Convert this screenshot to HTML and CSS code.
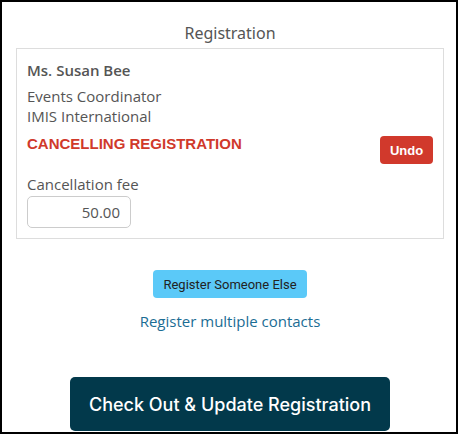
FILE: index.html
```html
<!DOCTYPE html>
<html lang="en">
  <head>
    <meta charset="UTF-8" />
    <meta name="viewport" content="width=device-width, initial-scale=1.0" />
    <title>Registration</title>
    <link rel="stylesheet" href="styles.css">
  </head>
  <body>
    <div class="frame">
      <h2 class="title">Registration</h2>

      <div class="card">
        <div class="name">Ms. Susan Bee</div>
        <div class="details">
          Events Coordinator<br />
          IMIS International
        </div>
        <div class="status-row">
          <span class="status">CANCELLING REGISTRATION</span>
          <button class="btn-undo">Undo</button>
        </div>
        <label class="fee-label" for="fee">Cancellation fee</label>
        <input class="fee-input" id="fee" type="text" value="50.00" />
      </div>

      <div class="actions">
        <button class="btn-other">Register Someone Else</button>
        <a class="link-multi" href="#">Register multiple contacts</a>
      </div>

      <div class="checkout">
        <button class="btn-checkout">Check Out &amp; Update Registration</button>
      </div>
    </div>
  </body>
</html>
```

FILE: styles.css
```css
html,
body {
  margin: 0;
  padding: 0;
  background: #fff;
}
.frame {
  box-sizing: border-box;
  width: 458px;
  height: 434px;
  border: 2px solid #000;
  overflow: hidden;
  padding: 0 12px 0 14px;
  font-family: "Open Sans", sans-serif;
  color: #555;
}
.title {
  margin: 20px 0 4px;
  font-family: "Noto Sans", sans-serif;
  font-size: 16px;
  font-weight: 400;
  line-height: 22px;
  text-align: center;
  color: #555;
}
.card {
  border: 1px solid #ddd;
  padding: 11px 10px 10px;
  height: 191px;
  box-sizing: border-box;
}
.name {
  font-size: 15px;
  font-weight: 600;
  line-height: 20px;
}
.details {
  margin-top: 6px;
  font-size: 15px;
  line-height: 20px;
}
.status-row {
  display: flex;
  justify-content: space-between;
  align-items: flex-start;
  margin-top: 8px;
}
.status {
  font-family: "Liberation Sans", Arial, sans-serif;
  font-size: 15px;
  font-weight: 700;
  color: #d0392b;
  line-height: 20px;
}
.btn-undo {
  font-family: "Liberation Sans", Arial, sans-serif;
  font-size: 13px;
  font-weight: 700;
  color: #fff;
  background: #d1392c;
  border: none;
  border-radius: 4px;
  width: 53px;
  height: 28px;
  margin-top: 2px;
  padding: 0;
}
.fee-label {
  display: block;
  margin-top: 10px;
  font-size: 15px;
  line-height: 20px;
}
.fee-input {
  display: block;
  margin-top: 2px;
  box-sizing: border-box;
  width: 104px;
  height: 32px;
  border: 1px solid #ccc;
  border-radius: 5px;
  padding: 0 10px;
  text-align: right;
  font-family: "Open Sans", sans-serif;
  font-size: 15px;
  color: #555;
}
.actions {
  display: flex;
  flex-direction: column;
  align-items: center;
  margin-top: 31px;
}
.btn-other {
  font-family: Roboto, sans-serif;
  font-size: 13px;
  color: #222;
  background: #5bc9f8;
  border: none;
  border-radius: 4px;
  height: 28px;
  padding: 0 10px;
}
.link-multi {
  margin-top: 13px;
  font-size: 15px;
  line-height: 20px;
  color: #1b6d94;
  text-decoration: none;
}
.checkout {
  display: flex;
  justify-content: center;
  margin-top: 46px;
}
.btn-checkout {
  font-family: Inter, sans-serif;
  font-size: 18px;
  font-weight: 500;
  color: #fff;
  background: #02394b;
  border: none;
  border-radius: 5px;
  width: 320px;
  height: 54px;
  padding: 0;
}
```
